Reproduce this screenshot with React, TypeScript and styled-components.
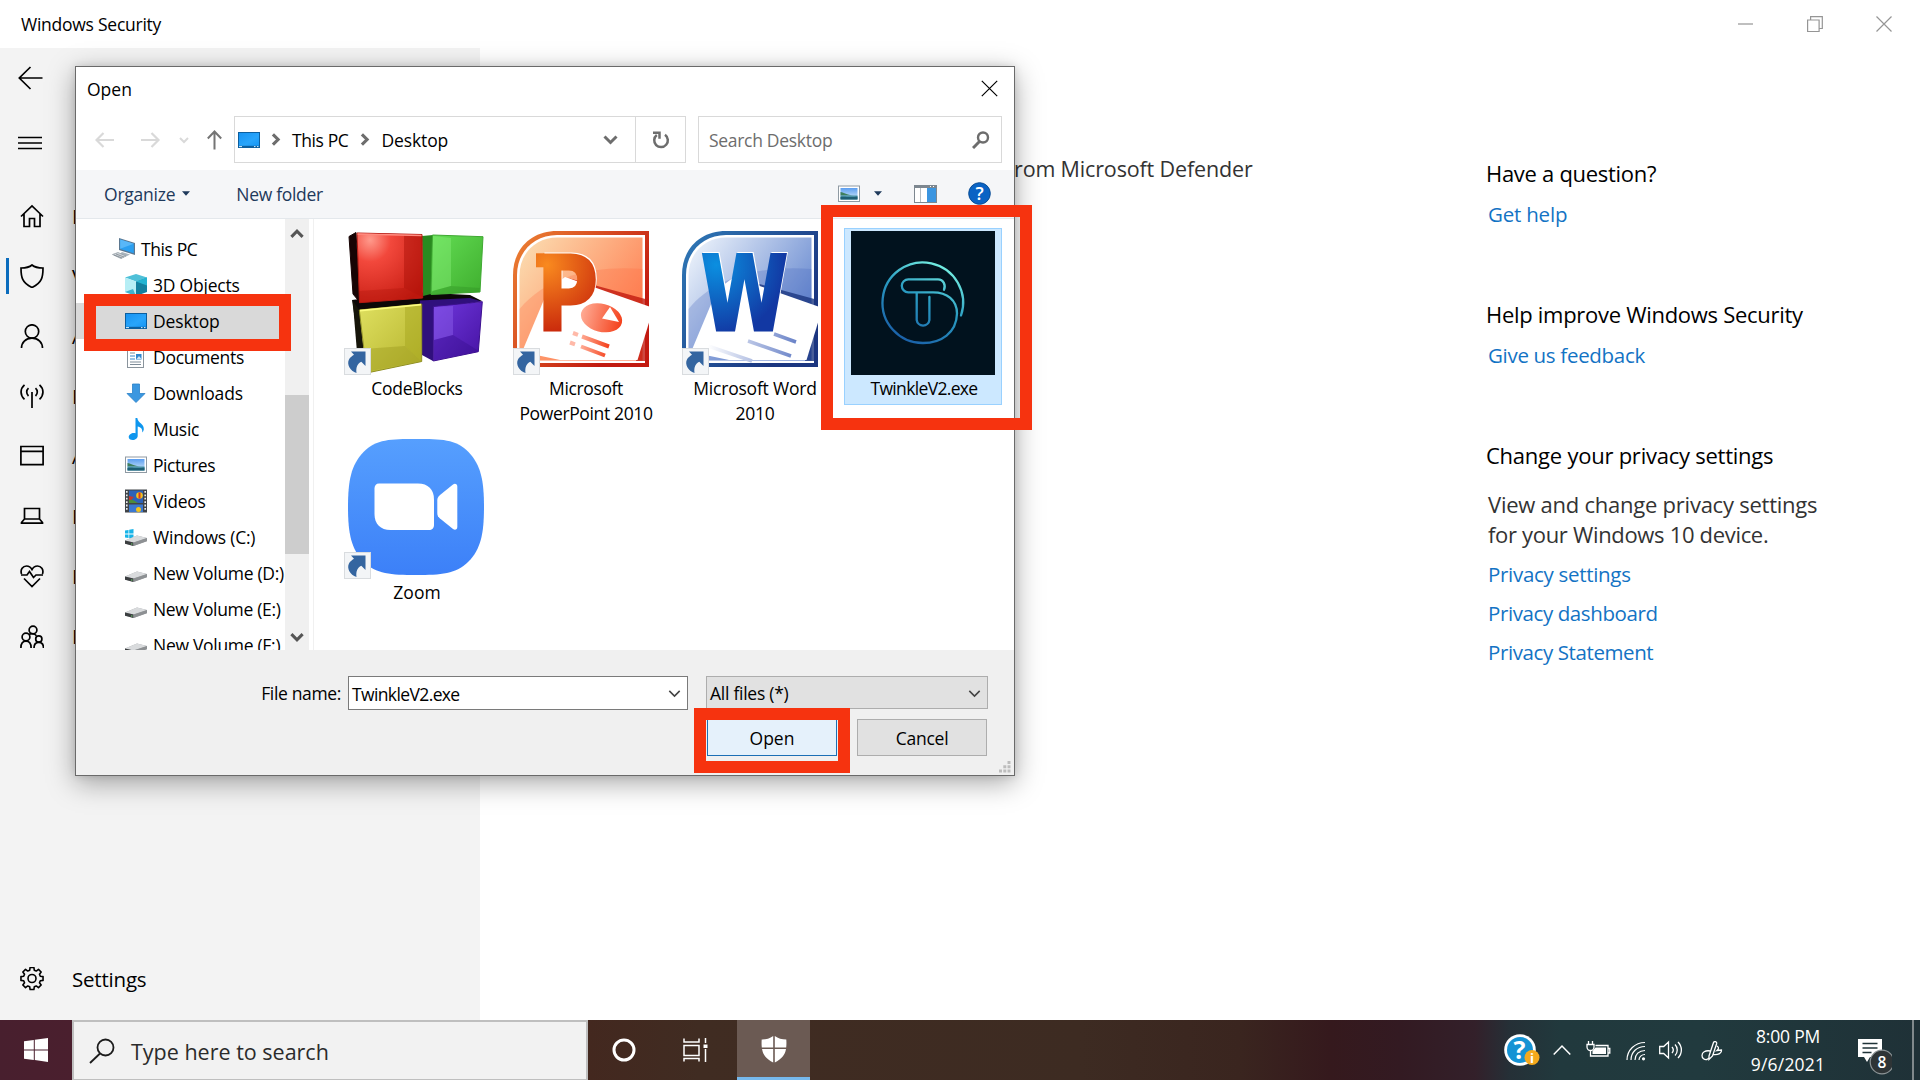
import React from 'react';
import styled, { createGlobalStyle, css } from 'styled-components';

const GlobalStyle = createGlobalStyle`
  *, *::before, *::after { box-sizing: border-box; }
  html, body { margin: 0; padding: 0; overflow: hidden; }
  svg { display: block; flex: none; }
`;

/* ---------- text ---------- */

const Text = styled.span<{ $ls?: number }>`
  white-space: nowrap;
  letter-spacing: ${p => p.$ls ?? -0.3}px;
`;

/* ---------- desktop + security window ---------- */

const Desktop = styled.div`
  position: relative;
  width: 1920px;
  height: 1080px;
  display: flex;
  flex-direction: column;
  overflow: hidden;
  background: #fff;
  color: #000;
  font-family: "Open Sans", "Noto Sans", sans-serif;
  font-size: 17.5px;
  line-height: 24px;
`;

const TitleBar = styled.header`
  height: 48px;
  flex: none;
  display: flex;
  align-items: center;
  justify-content: space-between;
  padding: 0 28px 0 21px;
`;

const WindowControls = styled.div`
  display: flex;
  gap: 53px;
  color: #959595;
`;

const WindowBody = styled.div`
  flex: 1;
  min-height: 0;
  display: flex;
`;

const Sidebar = styled.nav`
  width: 480px;
  display: flex;
  flex-direction: column;
  background: #f3f3f3;
  padding-bottom: 11px;
`;

const NavRow = styled.div<{ $active?: boolean; $gap?: number; $end?: boolean }>`
  height: 60px;
  flex: none;
  display: grid;
  grid-template-columns: 60px 1fr;
  column-gap: 6px;
  align-items: center;
  padding-left: 6px;
  margin-top: ${p => (p.$end ? 'auto' : `${p.$gap ?? 0}px`)};
  background: ${p => (p.$active ? 'linear-gradient(#0b6cbd, #0b6cbd) 6px 50% / 3px 36px no-repeat' : 'none')};
  font-size: 20.5px;
`;

const NavIcon = styled.div<{ $wide?: boolean }>`
  padding-left: ${p => (p.$wide ? 12 : 14)}px;
`;

const Main = styled.main`
  flex: 1;
  display: flex;
  justify-content: space-between;
  padding: 105px 0 0 534px;
  font-size: 22px;
  line-height: 30px;
`;

const Intro = styled.p`
  margin: 1px 0 0;
  color: #333;
  font-size: 21.5px;
`;

const Aside = styled.aside`
  width: 434px;
  display: flex;
  flex-direction: column;
  gap: 61px;
  padding-top: 5px;
`;

const HelpBlock = styled.section`
  display: flex;
  flex-direction: column;
`;

const Heading = styled.h2`
  margin: 0 0 11px;
  font: inherit;
`;

const Body = styled.p`
  margin: 8px 0 10px 2px;
  color: #333;
`;

const Link = styled.a`
  margin: 0 0 9px 2px;
  color: #1373c4;
  font-size: 20.5px;
`;

/* ---------- dialog ---------- */

const Dialog = styled.div`
  position: absolute;
  left: 75px;
  top: 66px;
  width: 940px;
  height: 710px;
  display: flex;
  flex-direction: column;
  border: 1px solid #6a6a6a;
  background: #fff;
  box-shadow: 0 7px 26px rgba(0, 0, 0, 0.34), 0 0 8px rgba(0, 0, 0, 0.12);
`;

const Caption = styled.div`
  height: 45px;
  flex: none;
  display: flex;
  align-items: center;
  justify-content: space-between;
  padding: 0 16px 2px 11px;
`;

const AddressRow = styled.div`
  height: 58px;
  flex: none;
  display: flex;
  align-items: stretch;
  padding: 4px 12px 7px 19px;
`;

const History = styled.div`
  width: 139px;
  display: grid;
  grid-template-columns: 46px 38px 28px 16px;
  align-items: center;
`;

const AddressBox = styled.div`
  width: 452px;
  display: flex;
  border: 1px solid #d9d9d9;
  margin-right: 12px;
`;

const Crumbs = styled.div`
  flex: 1;
  display: flex;
  align-items: center;
  padding: 0 17px 0 2px;
`;

const Crumb = styled(Text)`
  margin: 0 10px;
`;

const Place = styled.div`
  margin-right: 8px;
`;

const Spacer = styled.div`
  flex: 1;
`;

const RefreshButton = styled.div`
  width: 50px;
  display: flex;
  align-items: center;
  justify-content: center;
  border-left: 1px solid #d9d9d9;
`;

const SearchBox = styled.div`
  flex: 1;
  display: flex;
  align-items: center;
  justify-content: space-between;
  padding: 0 11px 0 10px;
  border: 1px solid #d9d9d9;
  color: #6d6d6d;
`;

const Toolbar = styled.div`
  height: 49px;
  flex: none;
  display: flex;
  align-items: center;
  padding: 0 23px 0 28px;
  background: #f5f6f8;
  border-bottom: 1px solid #e4e8ec;
  color: #1e395b;
`;

const ToolbarItem = styled.div<{ $gap: number; $inner?: number }>`
  display: flex;
  align-items: center;
  gap: ${p => p.$inner ?? 7}px;
  margin-right: ${p => p.$gap}px;
`;

const Browser = styled.div`
  height: 431px;
  flex: none;
  display: flex;
  overflow: hidden;
`;

const Tree = styled.div`
  width: 209px;
  padding-top: 12px;
  overflow: hidden;
`;

const TreeRow = styled.div<{ $root?: boolean; $selected?: boolean }>`
  height: 36px;
  display: grid;
  grid-template-columns: 24px auto;
  column-gap: 5px;
  align-items: center;
  justify-content: start;
  padding-left: ${p => (p.$root ? 36 : 48)}px;
  background: ${p => (p.$selected ? '#d9d9d9' : 'transparent')};
`;

const Scrollbar = styled.div`
  width: 24px;
  display: flex;
  flex-direction: column;
  align-items: center;
  background: #f0f0f0;
`;

const ScrollButton = styled.div`
  height: 25px;
  width: 100%;
  display: flex;
  justify-content: center;
  align-items: center;
  padding-top: 4px;

  &:last-child {
    padding: 0 0 2px;
  }
`;

const Thumb = styled.div`
  width: 100%;
  height: 159px;
  margin: 151px 0 71px;
  background: #cdcdcd;
`;

const Splitter = styled.div`
  width: 5px;
  border-right: 1px solid #f0f0f0;
`;

const Files = styled.div`
  flex: 1;
  display: grid;
  grid-template-columns: repeat(4, 158px);
  grid-auto-rows: 204px;
  column-gap: 11px;
  align-items: start;
  padding: 9px 0 0 23px;
`;

const FileCell = styled.div<{ $selected?: boolean }>`
  display: flex;
  flex-direction: column;
  align-items: center;
  padding: 2px 0 1px;
  border: 1px solid transparent;
  text-align: center;
  ${p => p.$selected && css`
    background: #cce8ff;
    border-color: #99d1ff;
  `}
`;

const Thumbnail = styled.div`
  position: relative;
  width: 144px;
  height: 144px;
`;

const Badge = styled.div`
  position: absolute;
  left: 0;
  bottom: 0;
`;

const FileName = styled.div`
  width: 156px;
  display: flex;
  flex-direction: column;
  padding: 1px 0 2px 2px;
  line-height: 25px;
`;

const Footer = styled.div`
  position: relative;
  flex: 1;
  display: flex;
  flex-direction: column;
  gap: 8px;
  padding: 26px 26px 0 0;
  background: #f0f0f0;
`;

const FooterRow = styled.div<{ $gap: number; $inset?: number }>`
  display: flex;
  justify-content: flex-end;
  align-items: flex-start;
  gap: ${p => p.$gap}px;
  padding-right: ${p => p.$inset ?? 0}px;
`;

const FieldLabel = styled.label`
  line-height: 35px;
  margin-right: -11px;
`;

const Combo = styled.div<{ $width: number; $height: number; $flat?: boolean }>`
  width: ${p => p.$width}px;
  height: ${p => p.$height}px;
  display: flex;
  align-items: center;
  justify-content: space-between;
  padding: 1px 6px 0 3px;
  border: 1px solid ${p => (p.$flat ? '#adadad' : '#7a7a7a')};
  background: ${p => (p.$flat ? '#e1e1e1' : '#fff')};
`;

const Button = styled.button<{ $primary?: boolean }>`
  width: 130px;
  height: 37px;
  padding: 0;
  border: ${p => (p.$primary ? '1.5px solid #1c6fb5' : '1px solid #adadad')};
  background: ${p => (p.$primary ? '#e5f1fb' : '#e1e1e1')};
  color: #000;
  font: inherit;
`;

const Grip = styled.div`
  position: absolute;
  right: 3px;
  bottom: 2px;
`;

const Highlight = styled.div<{ $x: number; $y: number; $w: number; $h: number }>`
  position: absolute;
  left: ${p => p.$x}px;
  top: ${p => p.$y}px;
  width: ${p => p.$w}px;
  height: ${p => p.$h}px;
  border: 12px solid #f6330f;
`;

/* ---------- taskbar ---------- */

const Taskbar = styled.footer`
  height: 60px;
  flex: none;
  display: flex;
  align-items: stretch;
  color: #fff;
  background: linear-gradient(90deg, #481f2e 0, #4a1f2e 72px, #43281f 588px, #402c22 700px, #3d2b22 1080px,
    #3a251f 1240px, #35191d 1330px, #331a22 1400px, #33202a 1475px, #253037 1510px, #21393d 1560px, #213a3e 1700px, #1f3137 1920px);
`;

const StartButton = styled.div`
  width: 72px;
  display: flex;
  align-items: center;
  justify-content: center;
`;

const TaskSearch = styled.div`
  width: 516px;
  display: flex;
  align-items: center;
  gap: 16px;
  padding: 2px 0 0 15px;
  background: #f2f2f2;
  border: 2px solid #bfbfbf;
  border-bottom-width: 1px;
  color: #2b2b2b;
  font-size: 21.5px;
`;

const TaskButton = styled.div<{ $active?: boolean }>`
  width: ${p => (p.$active ? 73 : 72)}px;
  margin-left: ${p => (p.$active ? 5 : 0)}px;
  display: flex;
  align-items: center;
  justify-content: center;
  background: ${p => (p.$active ? '#6b5a53' : 'transparent')};
  border-bottom: 3px solid ${p => (p.$active ? '#76b9ed' : 'transparent')};
  padding-top: 3px;
`;

const Tray = styled.div`
  width: 416px;
  margin-left: auto;
  display: flex;
  align-items: center;
  padding-top: 2px;
`;

const TrayItem = styled.div<{ $width: number; $drop?: number }>`
  width: ${p => p.$width}px;
  flex: none;
  padding-top: ${p => p.$drop ?? 0}px;
`;

const Clock = styled.div`
  width: 88px;
  display: flex;
  flex-direction: column;
  align-items: center;
  line-height: 28px;
  padding-bottom: 2px;
`;

const ShowDesktop = styled.div`
  width: 8px;
  margin-left: auto;
  align-self: stretch;
  margin-top: -2px;
  border-left: 2px solid #80898c;
`;

/* ---------- icons ---------- */

const Line = ({ w = 24, h = 24, sw = 1.7, children, color = 'currentColor', fill = 'none' }: any) => (
  <svg width={w} height={h} viewBox={`0 0 ${w} ${h}`} fill={fill} stroke={color} strokeWidth={sw}>{children}</svg>
);

const BackIcon = () => <Line w={26}><path d="M24.500 12H1M12.500 1L1.300 12l11.200 11" /></Line>;
const MenuIcon = () => <Line><path d="M0 6.500h24M0 12h24M0 17.500h24" /></Line>;
const HomeIcon = () => <Line><path d="M1 12.500L12 2l11 10.500M4 10v12.500h5.500v-8h5v8H20V10" /></Line>;
const ShieldIcon = () => <Line><path d="M12 1C9 3.500 5 4 1 4c0 9 1 15 11 19.500C22 19 23 13 23 4c-4 0-8-.5-11-3z" /></Line>;
const PersonIcon = () => <Line><circle cx="12" cy="7.500" r="6.700" /><path d="M1.500 24c0-5.500 4-9.800 10.500-9.800S22.500 18.500 22.500 24" /></Line>;
const AntennaIcon = () => (
  <Line><path d="M12 8v16M8.500 4.200c-2.400 2.200-2.400 5.600 0 7.800M15.500 4.200c2.400 2.200 2.400 5.600 0 7.800M4.500.8c-4.600 4-4.600 10.600 0 14.600M19.500.8c4.600 4 4.600 10.600 0 14.600" /></Line>
);
const WindowIcon = () => <Line><path d="M.9 2.500h22.200v18.200H.9zM.9 7.300h22.200" /></Line>;
const LaptopIcon = () => <Line><path d="M4.500 4.500h15V15h-15zM4.500 15l-3 3.500v.6h21v-.6l-3-3.500" /></Line>;
const HeartIcon = () => (
  <Line><path d="M1.500 10C0 5.500 3 2 6.500 2c2.500 0 4.300 1.300 5.500 3.500C13.200 3.300 15 2 17.500 2 21 2 24 5.500 22.500 10M1 11h6l2.500-3.500 4 6L16 11h7M4 14.500l8 8 8-8" /></Line>
);
const FamilyIcon = () => (
  <Line h={26}><g transform="translate(0 2)"><circle cx="13" cy="5" r="3.900" /><circle cx="6" cy="12" r="3.900" /><circle cx="18.800" cy="14" r="3.100" />
    <path d="M.9 23c0-4 1.800-6.800 5.100-6.800s5.100 2.800 5.100 6.800M9 9.500c2-1.200 5.500-1.200 7.500 1.200M14 23c0-3.200 1.800-5.600 4.800-5.600S23.500 19.800 23.500 23" /></g></Line>
);
const GearIcon = () => {
  const pts: string[] = [];
  for (let i = 0; i < 8; i++) {
    const a = (i * Math.PI) / 4;
    [[-0.27, 8.600], [-0.17, 11.200], [0.17, 11.200], [0.27, 8.600]].forEach(([d, r]) =>
      pts.push(`${(12 + r * Math.sin(a + d)).toFixed(2)},${(11.5 - r * Math.cos(a + d)).toFixed(2)}`));
  }
  return <Line sw={1.6}><polygon points={pts.join(' ')} strokeLinejoin="round" /><circle cx="12" cy="11.500" r="4" /></Line>;
};

const Chevron = ({ dir = 'right', color = '#6d6d6d', sw = 2.6, size = 10 }: any) => {
  const d: Record<string, string> = { right: 'M3 1l4 4-4 4', down: 'M1 3l4 4 4-4', up: 'M1 7l4-4 4 4' };
  return <svg width={size} height={size} viewBox="0 0 10 10" fill="none" stroke={color} strokeWidth={sw}><path d={d[dir]} /></svg>;
};

const Triangle = () => <svg width="8" height="7" viewBox="0 0 8 7"><path d="M0 .3h8L4 4.700z" fill="#1e395b" /></svg>;

const DesktopIcon = () => (
  <svg width="24" height="24" viewBox="0 0 24 24">
    <defs><linearGradient id="scr" x1="0" y1="0" x2="1" y2="1"><stop offset="0" stopColor="#1793f2" /><stop offset=".6" stopColor="#28a5fb" /><stop offset="1" stopColor="#1596f5" /></linearGradient></defs>
    <rect x="1" y="4" width="22" height="16" fill="#0c5f9f" /><rect x="2" y="5" width="20" height="12.800" fill="url(#scr)" />
    <path d="M2 18.600h3M17 18.600h1.500M20 18.600h1.500" stroke="#d8efff" />
  </svg>
);
const PcIcon = () => (
  <svg width="24" height="24" viewBox="0 0 24 24">
    <path d="M7 1l16 5v12L7 13z" fill="#5b7790" /><path d="M8.200 2.500l13.600 4.300v9.500L8.200 12z" fill="#2b9ff0" /><path d="M8.200 2.500l13.600 4.300-13.600 5z" fill="#58b7f8" />
    <path d="M10 15l8 2.500-4 2-7-2z" fill="#a9b4bd" /><path d="M.5 17.500L6 15.500l8 3.500-5 2.500z" fill="#d3d8dc" stroke="#8b969f" strokeWidth=".7" /><path d="M2 18l8 3M4 17l8 3" stroke="#7d8890" strokeWidth=".8" />
  </svg>
);
const CubeIcon = () => (
  <svg width="24" height="24" viewBox="0 0 24 24">
    <path d="M1 4.500L12 1l11 3.500-11 4z" fill="#4fc0d8" /><path d="M1 4.500l11 4V23L1 19z" fill="#b6eef5" /><path d="M12 8.500l11-4V19l-11 4z" fill="#13809f" /><path d="M12 8.500l11-4v8z" fill="#23b4d2" /><path d="M1 19l8-3 3 7z" fill="#3fb3cd" />
  </svg>
);
const DocIcon = () => (
  <svg width="24" height="24" viewBox="0 0 24 24">
    <rect x="3.500" y="1.500" width="16" height="21" fill="#fff" stroke="#8a949c" /><path d="M6 5h5M6 8h5M13 5h4M6 17h11M6 19.500h11" stroke="#7e8c98" /><path d="M6 11h5M6 14h5" stroke="#2e86cf" /><rect x="12" y="9" width="5.500" height="5.500" fill="#2e86cf" /><path d="M12.500 14l2.500-3 2.500 3z" fill="#cbe4f7" />
  </svg>
);
const DownIcon = () => (
  <svg width="24" height="24" viewBox="0 0 24 24"><path d="M8.500 3h7v9.500h5.500L12 21.500 3 12.500h5.500z" fill="#3b97e0" stroke="#2a80c6" strokeWidth=".8" /></svg>
);
const MusicIcon = () => (
  <svg width="24" height="24" viewBox="0 0 24 24"><path d="M11.500 1h1.800c.6 5 7.200 6 6.500 11.500-.2 1.300-.8 2.300-1.600 3 .6-3.600-1.500-5.500-4.500-6v9.300c0 2.500-2.400 4.200-5 4.200-2.400 0-4-1.300-4-3.100 0-2.300 2.600-4 5-4 .7 0 1.300.1 1.800.4z" fill="#0e96ee" /></svg>
);
const PictureIcon = () => (
  <svg width="24" height="24" viewBox="0 0 24 24">
    <defs><linearGradient id="sky" x1="0" y1="0" x2="0" y2="1"><stop offset="0" stopColor="#5b9df0" /><stop offset="1" stopColor="#d4ecfb" /></linearGradient></defs>
    <rect x="1.500" y="4" width="21" height="15.500" fill="#fff" stroke="#8f9aa3" /><rect x="3.500" y="6" width="17" height="11.500" fill="url(#sky)" />
    <path d="M3.500 10c4 .5 6 3 13 3.500h-13z" fill="#3f7f5d" /><path d="M3.500 13.500h17v4h-17z" fill="#4a93a8" /><path d="M3.500 15c4-1 9 1 17-.5v3h-17z" fill="#1f5f75" />
  </svg>
);
const VideoIcon = () => (
  <svg width="24" height="24" viewBox="0 0 24 24">
    <rect x="1" y=".5" width="22" height="23" fill="#404448" /><rect x="5" y="1.500" width="14" height="12.500" fill="#2d62b8" /><rect x="5" y="15.500" width="14" height="7.500" fill="#3b78d0" />
    <path d="M2.800 2v20M21.200 2v20" stroke="#eceef0" strokeWidth="1.600" strokeDasharray="1.800 1.600" />
    <circle cx="15.500" cy="6.500" r="3.300" fill="#f2c21d" /><path d="M14.500 3.500h2v6h-2z" fill="#d8342a" /><path d="M5 10c3 0 4 1 9 4H5z" fill="#4d8c3a" /><path d="M5 7l5 1-3 3H5z" fill="#c8372b" /><circle cx="14.500" cy="20.500" r="2.500" fill="#f2c21d" />
  </svg>
);
const DriveIcon = ({ win }: { win?: boolean }) => (
  <svg width="24" height="24" viewBox="0 0 24 24">
    {win && <path d="M1 5.500l3.500-.6v3.700H1zM5.200 4.800L9.500 4v4.600H5.200zM1 9.400h3.500v3.700L1 12.500zM5.200 9.400h4.300V14l-4.300-.8z" fill="#18b4e8" />}
    <path d="M1 15.500L13 10.500l10 2.500v3L9.500 21 1 18.500z" fill="#a3a6a9" /><path d="M1 15.500L13 10.500l10 2.500-13.500 4.500z" fill="#d9dbdd" /><path d="M1 15.500l8.500 2v3.500L1 18.700z" fill="#3b3e40" /><path d="M9.500 17.500L23 13v3.200L9.500 21z" fill="#8d9093" /><path d="M7 19h1.500" stroke="#6fcf6f" />
  </svg>
);

/* ---------- file thumbnails ---------- */

const ShortcutBadge = () => (
  <Badge>
    <svg width="27" height="27" viewBox="0 0 27 27">
      <rect x=".5" y=".5" width="26" height="26" fill="#f3f5f7" stroke="#d9dcdf" />
      <path d="M7 3.500h14.500V18l-4.200-4.200c-4 2-5.500 5.500-4.800 11.200C6 23 2.500 16 5 11.500c1-2 2.800-3.200 5-4.700z" fill="#3465a0" />
    </svg>
  </Badge>
);

const CodeBlocksArt = () => (
  <svg width="144" height="144" viewBox="0 0 144 144">
    <defs>
      <radialGradient id="cr" cx=".2" cy=".1" r="1.050"><stop offset="0" stopColor="#ff9a8c" /><stop offset=".3" stopColor="#f2483c" /><stop offset="1" stopColor="#c41a10" /></radialGradient>
      <linearGradient id="cg" x1="0" y1="0" x2="1" y2="1"><stop offset="0" stopColor="#63dd54" /><stop offset="1" stopColor="#3fae2e" /></linearGradient>
      <linearGradient id="cy" x1="0" y1="0" x2="1" y2="1"><stop offset="0" stopColor="#dfe060" /><stop offset="1" stopColor="#b4b22c" /></linearGradient>
      <linearGradient id="cp" x1="0" y1="0" x2="1" y2="1"><stop offset="0" stopColor="#7038dd" /><stop offset="1" stopColor="#4512a2" /></linearGradient>
    </defs>
    <path d="M8 69l60-8 58 3 12 6-50 8-72 6-3 35 3 3z" fill="#0c0808" />
    <path d="M5 5.500L12 1.500l4 70L9 63z" fill="#170404" stroke="#170404" strokeLinejoin="round" />
    <path d="M78 5l11-1-2 59-8 2z" fill="#2a8a20" />
    <path d="M88.500 4l50.500 1.700-3 55.300-49 2.500z" fill="url(#cg)" stroke="#3fa832" strokeLinejoin="round" />
    <path d="M89 5l18 2v48l-19 5z" fill="#8df07e" opacity=".4" /><path d="M89 60l18-5 29 2-1 4-48 2z" fill="#2e8d22" opacity=".35" />
    <path d="M13 2l65 1.500.7 63.500-63.200 4.700z" fill="url(#cr)" stroke="#b31810" strokeLinejoin="round" />
    <path d="M60 4l18 1v61l-18-9z" fill="#a80f06" opacity=".45" /><path d="M15 60l45-3 18 9-62 5z" fill="#a81208" opacity=".3" /><path d="M13.500 3l64 1.500" stroke="#ff8c80" strokeWidth="1.500" />
    <path d="M76 69.500l50-2.500 12 3.500-48.500 5L89 130l-11-6z" fill="#30107c" />
    <path d="M89.300 75.500l49-4.800-4 50-45 9.300z" fill="url(#cp)" stroke="#3c1090" strokeLinejoin="round" />
    <path d="M90 76l19-1v29l-19 5z" fill="#9468f0" opacity=".4" /><path d="M90 109l19-5 26 16-45 9z" fill="#300a80" opacity=".3" />
    <path d="M8.700 69.500L15.300 79l7 63-8-5z" fill="#16150a" />
    <path d="M15.300 79l62.400-6v57.500L22.700 142z" fill="url(#cy)" stroke="#8f8e20" strokeLinejoin="round" />
    <path d="M61 76l16-2v56l-16-15z" fill="#a5a31d" opacity=".45" /><path d="M19 118l42-3 16 15-55 11z" fill="#99971c" opacity=".4" /><path d="M16 79.700l61-6" stroke="#fbfb80" strokeWidth="1.800" />
  </svg>
);

const Monogram = styled.text`
  font-family: "DejaVu Sans", sans-serif;
  font-weight: 700;
  font-size: 103px;
  filter: drop-shadow(1.5px -0.5px 0 #fff);
`;

const OfficeArt = ({ kind }: { kind: 'P' | 'W' }) => {
  const p = kind === 'P';
  const c = p
    ? { a: '#ee8434', b: '#c21a10', f1: '#fbe0b4', f2: '#ff7b4e', t1: '#f98a1f', t2: '#c8260b', band: '#ff6a3f' }
    : { a: '#2f7ab8', b: '#1b3680', f1: '#f3f8fd', f2: '#5c80cc', t1: '#0b8fe0', t2: '#1238a3', band: '#4769bd' };
  return (
    <svg width="144" height="144" viewBox="0 0 144 144">
      <defs>
        <linearGradient id={`b${kind}`} x1="0" y1="0" x2=".9" y2=".6"><stop offset="0" stopColor={c.a} /><stop offset="1" stopColor={c.b} /></linearGradient>
        <linearGradient id={`f${kind}`} x1="0" y1="0" x2="1" y2=".7"><stop offset="0" stopColor={c.f1} /><stop offset="1" stopColor={c.f2} /></linearGradient>
        <radialGradient id={`t${kind}`} gradientUnits="userSpaceOnUse" cx="34" cy="34" r="70"><stop offset="0" stopColor={c.t1} /><stop offset="1" stopColor={c.t2} /></radialGradient>
        <linearGradient id={`l${kind}`}><stop offset="0" stopColor={p ? '#ffab94' : '#fff'} /><stop offset="1" stopColor={p ? '#f4411c' : '#6a83c8'} /></linearGradient>
      </defs>
      <path d="M0 136V44C0 18 18 0 44 0h92v136z" fill={`url(#b${kind})`} />
      <path d="M4 132V44C4 21 21 4 44 4h88v128z" fill="#fff" />
      <path d="M6.500 129.500V44.500c0-22 16-38 38-38h85v123z" fill={`url(#f${kind})`} />
      <path d="M6.500 78C34 44 85 34 129.500 38v91.500h-123z" fill={c.band} opacity=".28" />
      <path d="M55 47l81 22v14l-13 47h13V80z" fill={c.b} opacity=".8" />
      <path d="M52 46l88.500 31-16 52H47L9 121l26-62z" fill="#fff" />
      {p ? (
        <g>
          <ellipse cx="88.500" cy="86.800" rx="21" ry="14" transform="rotate(14 88.500 86.800)" fill="url(#lP)" />
          <path d="M89 87.500l8-11.500 9 15z" fill="#fff" />
          <path d="M69 105.500l27 10M68 115.500l24 9" stroke="url(#lP)" strokeWidth="4" /><path d="M60 102l5 1.800M57 111.500l5 1.800" stroke="#ffb9a8" strokeWidth="4" />
          <path d="M23 22.300h14v14H23z" fill="url(#tP)" />
        </g>
      ) : (
        <path d="M92 103l22 8M66 110l43 15M26 115l44 15" stroke="url(#lW)" strokeWidth="3.500" />
      )}
      <Monogram x={p ? 24 : 19} y="98.500" textLength={p ? 61 : 87} lengthAdjust="spacingAndGlyphs"
        fill={`url(#t${kind})`} stroke={`url(#t${kind})`} strokeWidth="3">{kind}</Monogram>
    </svg>
  );
};

const TwinkleArt = () => (
  <svg width="144" height="144" viewBox="0 0 144 144">
    <defs><linearGradient id="tw" gradientUnits="userSpaceOnUse" x1="95" y1="36" x2="55" y2="112"><stop offset="0" stopColor="#74eee2" /><stop offset=".45" stopColor="#2a9cc2" /><stop offset="1" stopColor="#1a5fa8" /></linearGradient></defs>
    <rect width="144" height="144" fill="#01121e" />
    <path d="M110 84.500A40.300 40.300 0 1 0 72 112c18 0 33.500-10 34-29.500C106 69 96 61.300 82 61.300H57.300a6.500 6.500 0 0 1 0-13H87c5.500 0 8 6 6 10.500M65.700 61.500V89a6.400 6.400 0 0 0 12.700 0V66" fill="none" stroke="url(#tw)" strokeWidth="2.300" strokeLinecap="round" />
  </svg>
);

const ZoomArt = () => (
  <svg width="144" height="144" viewBox="0 0 144 144">
    <defs><linearGradient id="zm" x1="0" y1="0" x2="0" y2="1"><stop offset="0" stopColor="#569ffe" /><stop offset="1" stopColor="#3c80f8" /></linearGradient></defs>
    <path d="M72 4c25 0 40 0 52.500 13S140 46 140 72s-3 42-15.500 54.500S97 140 72 140s-40-1-52.500-13.500S4 98 4 72s3-42 15.500-55S47 4 72 4z" fill="url(#zm)" />
    <path d="M35 48.500h39c10 0 16 6 16 16V90c0 3-2 5-5 5H46.500c-10 0-16-6-16-16V53.500c0-3 1.500-5 4.500-5z" fill="#fff" />
    <path d="M96 60l13-10.500c2-1.500 4.300-.5 4.300 2V92c0 2.600-2.300 3.600-4.300 2L96 83.500c-1.800-1.500-2.700-3-2.700-5.500V65.500c0-2.500.9-4 2.700-5.500z" fill="#fff" />
  </svg>
);

/* ---------- data ---------- */

const navItems = [
  ['H', HomeIcon], ['V', ShieldIcon], ['A', PersonIcon], ['F', AntennaIcon],
  ['A', WindowIcon], ['D', LaptopIcon], ['D', HeartIcon], ['F', FamilyIcon],
] as const;

const treeItems: [string, React.ReactNode, number?][] = [
  ['This PC', <PcIcon />, -0.4], ['3D Objects', <CubeIcon />, -0.22], ['Desktop', <DesktopIcon />, -0.12], ['Documents', <DocIcon />],
  ['Downloads', <DownIcon />, -0.15], ['Music', <MusicIcon />], ['Pictures', <PictureIcon />, -0.45], ['Videos', <VideoIcon />],
  ['Windows (C:)', <DriveIcon win />, -0.22], ['New Volume (D:)', <DriveIcon />], ['New Volume (E:)', <DriveIcon />, -0.33], ['New Volume (F:)', <DriveIcon />],
];

const files: { lines: string[]; art: React.ReactNode; link?: boolean; selected?: boolean; ls?: number }[] = [
  { lines: ['CodeBlocks'], art: <CodeBlocksArt />, link: true },
  { lines: ['Microsoft', 'PowerPoint 2010'], art: <OfficeArt kind="P" />, link: true, ls: -0.36 },
  { lines: ['Microsoft Word', '2010'], art: <OfficeArt kind="W" />, link: true, ls: -0.2 },
  { lines: ['TwinkleV2.exe'], art: <TwinkleArt />, selected: true, ls: -0.66 },
  { lines: ['Zoom'], art: <ZoomArt />, link: true, ls: 0 },
];

/* ---------- sections ---------- */

const OpenDialog = () => (
  <Dialog>
    <Caption>
      <Text $ls={0}>Open</Text>
      <Line w={17} h={17} sw={1.2}><path d="M.8.800l15.400 15.400M16.200.800L.8 16.200" /></Line>
    </Caption>
    <AddressRow>
      <History>
        <Line w={20} h={16} sw={2.2} color="#d9d9d9"><path d="M19 8H1.500M8.500 1l-7 7 7 7" /></Line>
        <Line w={20} h={16} sw={2.2} color="#d9d9d9"><path d="M0 8h17.500M10.500 1l7 7-7 7" /></Line>
        <Chevron dir="down" color="#d9d9d9" sw={2} />
        <Line w={15} h={20} sw={2} color="#757575"><path d="M7.500 19.500V2M.8 8.500l6.700-7 6.700 7" /></Line>
      </History>
      <AddressBox>
        <Crumbs>
          <Place><DesktopIcon /></Place>
          <Chevron size={13} sw={2.4} />
          <Crumb $ls={-0.4}>This PC</Crumb>
          <Chevron size={13} sw={2.4} />
          <Crumb $ls={-0.12}>Desktop</Crumb>
          <Spacer />
          <Chevron dir="down" size={15} sw={2} />
        </Crumbs>
        <RefreshButton>
          <Line w={18} h={18} sw={2.500} color="#6d6d6d"><path d="M13 3.800A6.800 6.800 0 1 1 4.800 4" /><path d="M1 1.800h6.500v6" /></Line>
        </RefreshButton>
      </AddressBox>
      <SearchBox>
        <Text $ls={-0.3}>Search Desktop</Text>
        <Line w={18} h={18} sw={2.400} color="#6d6d6d"><circle cx="11" cy="6.500" r="5" /><path d="M7.500 10.500L1 17" strokeWidth="3" /></Line>
      </SearchBox>
    </AddressRow>
    <Toolbar>
      <ToolbarItem $gap={46}><Text $ls={-0.23}>Organize</Text><Triangle /></ToolbarItem>
      <Text $ls={-0.32}>New folder</Text>
      <Spacer />
      <ToolbarItem $gap={32} $inner={13}><PictureIcon /><Triangle /></ToolbarItem>
      <ToolbarItem $gap={31}>
        <svg width="23" height="18" viewBox="0 0 23 18"><rect x=".5" y=".5" width="22" height="17" fill="#fff" stroke="#7d8790" /><path d="M1 2h21" stroke="#7d8790" strokeWidth="2" /><path d="M6.500 3v14" stroke="#b5bcc2" /><path d="M13 3h9v14h-9z" fill="#3b95e0" /><path d="M16 1.500h1M19 1.500h1" stroke="#fff" /></svg>
      </ToolbarItem>
      <svg width="23" height="25" viewBox="0 0 23 25"><circle cx="11.500" cy="11.500" r="10.800" fill="#0a63c4" stroke="#0a4d94" /><text x="11.500" y="18" textAnchor="middle" fontFamily="Open Sans, sans-serif" fontSize="18" fontWeight="600" fill="#fff">?</text></svg>
    </Toolbar>
    <Browser>
      <Tree>
        {treeItems.map(([label, icon, ls], i) => (
          <TreeRow key={label} $root={i === 0} $selected={label === 'Desktop'}>{icon}<Text $ls={ls}>{label}</Text></TreeRow>
        ))}
      </Tree>
      <Scrollbar>
        <ScrollButton><Chevron dir="up" size={14} color="#555" sw={2.200} /></ScrollButton>
        <Thumb />
        <ScrollButton><Chevron dir="down" size={14} color="#555" sw={2.200} /></ScrollButton>
      </Scrollbar>
      <Splitter />
      <Files>
        {files.map(f => (
          <FileCell key={f.lines.join(' ')} $selected={f.selected}>
            <Thumbnail>{f.art}{f.link && <ShortcutBadge />}</Thumbnail>
            <FileName>{f.lines.map(l => <Text key={l} $ls={f.ls}>{l}</Text>)}</FileName>
          </FileCell>
        ))}
      </Files>
    </Browser>
    <Footer>
      <FooterRow $gap={18}>
        <FieldLabel><Text $ls={-0.35}>File name:</Text></FieldLabel>
        <Combo $width={340} $height={34}><Text $ls={-0.62}>TwinkleV2.exe</Text><Chevron dir="down" size={13} color="#444" sw={1.200} /></Combo>
        <Combo $width={282} $height={33} $flat><Text $ls={-0.26}>All files (*)</Text><Chevron dir="down" size={13} color="#444" sw={1.200} /></Combo>
      </FooterRow>
      <FooterRow $gap={20} $inset={1}>
        <Button $primary><Text $ls={0}>Open</Text></Button>
        <Button><Text $ls={-0.25}>Cancel</Text></Button>
      </FooterRow>
      <Grip>
        <svg width="12" height="12" viewBox="0 0 12 12" fill="#bdbdbd"><path d="M8.500 0h3v3h-3zM8.500 4.300h3v3h-3zM4.300 4.300h3v3h-3zM8.500 8.600h3v3h-3zM4.300 8.600h3v3h-3zM0 8.600h3v3H0z" /></svg>
      </Grip>
    </Footer>
  </Dialog>
);

const SystemTray = () => (
  <Tray>
    <TrayItem $width={49}>
      <svg width="37" height="34" viewBox="0 0 37 34">
        <circle cx="16" cy="16" r="15.800" fill="#fff" /><circle cx="16" cy="16" r="13" fill="#1593d4" />
        <text x="15.500" y="25" textAnchor="middle" fontFamily="Open Sans, sans-serif" fontSize="25" fontWeight="700" fill="#fff">?</text>
        <circle cx="28" cy="23.500" r="7.500" fill="#f5a91d" /><text x="28" y="28.500" textAnchor="middle" fontFamily="Open Sans, sans-serif" fontSize="13" fontWeight="700" fill="#fff">i</text>
      </svg>
    </TrayItem>
    <TrayItem $width={33}><Line w={18} h={14} sw={1.5}><path d="M.7 10.500L9 2l8.300 8.500" /></Line></TrayItem>
    <TrayItem $width={40}>
      <Line w={25} h={22} sw={1.300}><path d="M2.500 1v3.500M6.500 1v3.500M1 4.500h7v2.500a3.500 3.500 0 0 1-7 0zM4.500 10.500V16H22V5.500H9.500M22 8.500h1.800v4.500H22" /><path d="M9.500 7.500h10.500v6.500H6.500v-3z" fill="#fff" stroke="none" /></Line>
    </TrayItem>
    <TrayItem $width={33}>
      <Line w={20} h={20} sw={1.200}><path d="M1 19C1 9 9 1.500 19 1.500M5 19c0-8 6-13.500 14-13.500M9 19c0-5.500 4-9.500 10-9.500M13 19c0-3 2.500-5.500 6-5.500" /><circle cx="17.500" cy="17.800" r="1.600" fill="#fff" stroke="none" /></Line>
    </TrayItem>
    <TrayItem $width={42}>
      <Line w={24} h={22} sw={1.300}><path d="M.7 6.500h4L9.500 2v16l-4.800-4.500h-4zM13 7c1.500 1.700 1.500 4.300 0 6M16 4.500c3 3 3 8 0 11M19 2c4.500 4.500 4.500 11.500 0 16" /></Line>
    </TrayItem>
    <TrayItem $width={43}>
      <Line w={22} h={23} sw={1.300}><path d="M8 16L12.500 2.500c.6-1.600 3.600-.8 3.200 1L11.500 16l-3.500 3.500zM9.500 11C4 10 1 12.500 1 15.500s2.500 4.500 5 4L8 18M16 6c2 1 2 3 0 4.500l4.500-.5c.5 3-3 5-8 4.500" /></Line>
    </TrayItem>
    <Clock><Text $ls={-0.2}>8:00 PM</Text><Text $ls={0.2}>9/6/2021</Text></Clock>
    <TrayItem $width={60} $drop={5}>
      <svg width="60" height="44" viewBox="0 0 60 44">
        <path d="M26 7h24v18H38l-3 5-3-5h-6z" fill="#fff" /><path d="M30.500 11.500h15M30.500 16h15M30.500 20.500h9" stroke="#1f3338" strokeWidth="1.600" />
        <circle cx="50" cy="30" r="11.800" fill="#2e3436" stroke="#8d9496" strokeWidth="1.200" />
        <text x="50" y="35.700" textAnchor="middle" fontFamily="Open Sans, sans-serif" fontSize="15.500" fontWeight="600" fill="#fff">8</text>
      </svg>
    </TrayItem>
    <ShowDesktop />
  </Tray>
);

export default function App() {
  return (
    <Desktop>
      <GlobalStyle />
      <TitleBar>
        <Text $ls={-0.25}>Windows Security</Text>
        <WindowControls>
          <Line w={16} h={16} sw={1.2}><path d="M0 8h15" /></Line>
          <Line w={16} h={16} sw={1.2}><path d="M.6 4h11.500v11.500H.6zM3.600 4V.7h11.700v11.800H12" /></Line>
          <Line w={16} h={16} sw={1.2}><path d="M.5.5l15 15M15.500.500l-15 15" /></Line>
        </WindowControls>
      </TitleBar>
      <WindowBody>
        <Sidebar>
          <NavRow><NavIcon $wide><BackIcon /></NavIcon></NavRow>
          <NavRow $gap={5}><NavIcon $wide><MenuIcon /></NavIcon></NavRow>
          {navItems.map(([label, Icon], i) => (
            <NavRow key={i} $active={i === 1} $gap={i === 0 ? 13 : 0}><NavIcon><Icon /></NavIcon><Text>{label}</Text></NavRow>
          ))}
          <NavRow $end><NavIcon><GearIcon /></NavIcon><Text $ls={-0.2}>Settings</Text></NavRow>
        </Sidebar>
        <Main>
          <Intro><Text $ls={-0.15}>rom Microsoft Defender</Text></Intro>
          <Aside>
            <HelpBlock>
              <Heading><Text $ls={-0.29}>Have a question?</Text></Heading>
              <Link><Text $ls={-0.2}>Get help</Text></Link>
            </HelpBlock>
            <HelpBlock>
              <Heading><Text $ls={-0.29}>Help improve Windows Security</Text></Heading>
              <Link><Text $ls={-0.31}>Give us feedback</Text></Link>
            </HelpBlock>
            <HelpBlock>
              <Heading><Text $ls={-0.24}>Change your privacy settings</Text></Heading>
              <Body><Text $ls={-0.24}>View and change privacy settings</Text><br /><Text $ls={-0.32}>for your Windows 10 device.</Text></Body>
              <Link><Text $ls={-0.3}>Privacy settings</Text></Link>
              <Link><Text $ls={-0.4}>Privacy dashboard</Text></Link>
              <Link><Text $ls={-0.4}>Privacy Statement</Text></Link>
            </HelpBlock>
          </Aside>
        </Main>
      </WindowBody>
      <Taskbar>
        <StartButton>
          <svg width="24" height="24" viewBox="0 0 24 24" fill="#fff"><path d="M0 3.300l9.800-1.400v9.500H0zM10.800 1.800L24 0v11.400H10.800zM0 12.500h9.800V22L0 20.700zM10.800 12.500H24V24l-13.200-1.900z" /></svg>
        </StartButton>
        <TaskSearch>
          <Line w={26} h={28} sw={1.800} color="#1c1c1c"><circle cx="16.500" cy="9.500" r="8" /><path d="M11 15.500L1 25" /></Line>
          <Text $ls={0}>Type here to search</Text>
        </TaskSearch>
        <TaskButton><Line w={24} h={24} sw={3}><circle cx="12" cy="12" r="10" /></Line></TaskButton>
        <TaskButton>
          <Line w={26} h={24} sw={1.500}><path d="M1 .5V4h15V.500M1 7.500h15v10H1zM1 23.500V20.500h15v3M22.500 0v5M22.500 11v13" /><path d="M20.500 6.500h4v3.500h-4z" fill="#fff" stroke="none" /></Line>
        </TaskButton>
        <TaskButton $active>
          <svg width="26" height="28" viewBox="0 0 26 28" fill="#fff"><path d="M12.200 0v11.500H.8C.5 9 .5 6 .7 3.500 5 3.500 9 2.500 12.200 0zM13.800 0c3.200 2.500 7.200 3.500 11.500 3.500.2 2.500.2 5.500-.1 8H13.800zM1 13h11.200v13.500C5.500 23 2 19 1 13zM13.800 13H25c-1 6-4.500 10-11.200 13.500z" /></svg>
        </TaskButton>
        <SystemTray />
      </Taskbar>
      <OpenDialog />
      <Highlight $x={84} $y={294} $w={207} $h={57} />
      <Highlight $x={821} $y={205} $w={211} $h={225} />
      <Highlight $x={694} $y={708} $w={156} $h={65} />
    </Desktop>
  );
}
